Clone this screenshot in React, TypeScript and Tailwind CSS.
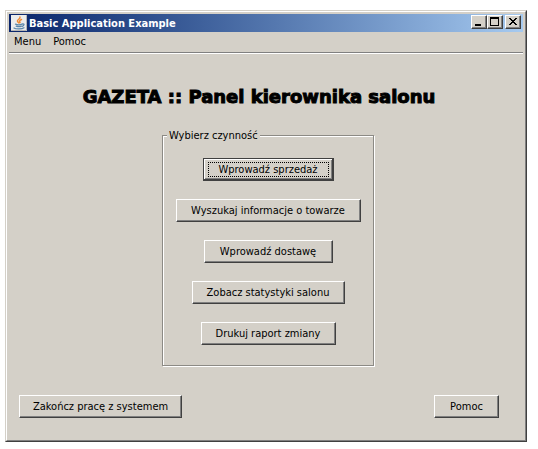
import type { ReactNode } from "react";

const bevel =
  "border border-t-white border-l-white border-r-[#404040] border-b-[#404040] shadow-[inset_-1px_-1px_0_#808080]";

const defaultBevel =
  "border border-[#404040] shadow-[inset_-1px_-1px_0_#404040,inset_1px_1px_0_#fff,inset_-2px_-2px_0_#808080]";

function PushButton({ width, focused = false, children }: { width: string; focused?: boolean; children: ReactNode }) {
  return (
    <button
      type="button"
      className={`${width} h-[23px] whitespace-nowrap bg-[#d4d0c8] px-1 py-[3px] ${focused ? defaultBevel : bevel}`}
    >
      <span
        className={`flex h-full items-center justify-center ${focused ? "border border-dotted border-black" : ""}`}
      >
        {children}
      </span>
    </button>
  );
}

function CaptionButton({ label, children }: { label: string; children: ReactNode }) {
  return (
    <button type="button" aria-label={label} className={`h-[14px] w-4 bg-[#d4d0c8] ${bevel}`}>
      <svg viewBox="0 0 14 12" className="h-3 w-[14px]" fill="none" stroke="#000" shapeRendering="crispEdges">
        {children}
      </svg>
    </button>
  );
}

function JavaIcon() {
  return (
    <svg viewBox="0 0 16 16" className="h-4 w-4" fill="none" strokeLinecap="round">
      <rect width="16" height="16" fill="#ececec" />
      <path d="M.5 15.500h15V.5" stroke="#b5b5b5" />
      <path d="M9 2C10 4 5.500 4.500 6.500 6.500L8 8M10.500 4.500C8 5.500 8.500 6.500 9 7.500" stroke="#ef8a35" strokeWidth="1.500" />
      <path d="M4.500 9.200c1.500.6 5 .6 6.500 0M5.200 11.200c1.500.5 4 .5 5.200 0M11.500 9c2.200-.4 1.800 1.600-.3 2.300M3 13c2 1.400 8 1.200 10-.2" stroke="#5b87ab" strokeWidth="1.300" />
    </svg>
  );
}

export default function App() {
  return (
    <main className="bg-white pt-[10px] pr-[11px] pb-2 pl-[5px] font-['DejaVu_Sans_Condensed','DejaVu_Sans',sans-serif] text-[11px] leading-[15px] text-black">
      <div className="border border-t-[#d4d0c8] border-l-[#d4d0c8] border-r-[#404040] border-b-[#404040]">
        <div className="border border-t-white border-l-white border-r-[#808080] border-b-[#808080] bg-[#d4d0c8] p-[2px]">
          <header className="flex h-[18px] items-center bg-linear-to-r from-[#0a246a] to-[#a6caf0] pr-[2px] pl-[2px] text-white">
            <JavaIcon />
            <h1 className="grow pl-[2px] font-bold">Basic Application Example</h1>
            <div className="flex">
              <CaptionButton label="Minimize">
                <path d="M3 9h6" strokeWidth="2" />
              </CaptionButton>
              <CaptionButton label="Maximize">
                <path d="M2.500 1.500h8v8h-8zM2 2h9" />
              </CaptionButton>
              <div className="pl-[2px]">
                <CaptionButton label="Close">
                  <path
                    d="M3 2h2v1h1v1h2v-1h1v-1h2v1h-1v1h-1v1h-1v1h1v1h1v1h1v1h-2v-1h-1v-1h-2v1h-1v1h-2v-1h1v-1h1v-1h1v-1h-1v-1h-1v-1h-1z"
                    fill="#000"
                    stroke="none"
                  />
                </CaptionButton>
              </div>
            </div>
          </header>
          <nav className="flex h-[21px] items-center gap-3 border-b border-[#808080] px-[5px] pb-px shadow-[0_1px_0_#fff]">
            <button type="button">Menu</button>
            <button type="button">Pomoc</button>
          </nav>
          <div className="px-[10px] pt-8 pb-5">
            <h2 className="pr-[14px] text-center font-['DejaVu_Sans',sans-serif] text-[18px] leading-6 font-bold [-webkit-text-stroke:1px_#000]">
              GAZETA :: Panel kierownika salonu
            </h2>
            <div className="flex justify-center pt-[19px] pl-1">
              <fieldset className="w-[212px] border border-[#8c8a85] px-1 pb-5 shadow-[1px_1px_0_#fff,inset_1px_1px_0_#fff]">
                <legend className="bg-[#d4d0c8] px-[2px]">Wybierz czynność</legend>
                <div className="flex flex-col items-center gap-[18px] pt-[15px]">
                  <PushButton width="w-[131px]" focused>Wprowadź sprzedaż</PushButton>
                  <PushButton width="w-[185px]">Wyszukaj informacje o towarze</PushButton>
                  <PushButton width="w-[129px]">Wprowadź dostawę</PushButton>
                  <PushButton width="w-[153px]">Zobacz statystyki salonu</PushButton>
                  <PushButton width="w-[135px]">Drukuj raport zmiany</PushButton>
                </div>
              </fieldset>
            </div>
            <div className="flex justify-between pt-[29px] pr-[14px]">
              <PushButton width="w-[163px]">Zakończ pracę z systemem</PushButton>
              <PushButton width="w-[65px]">Pomoc</PushButton>
            </div>
          </div>
        </div>
      </div>
    </main>
  );
}
